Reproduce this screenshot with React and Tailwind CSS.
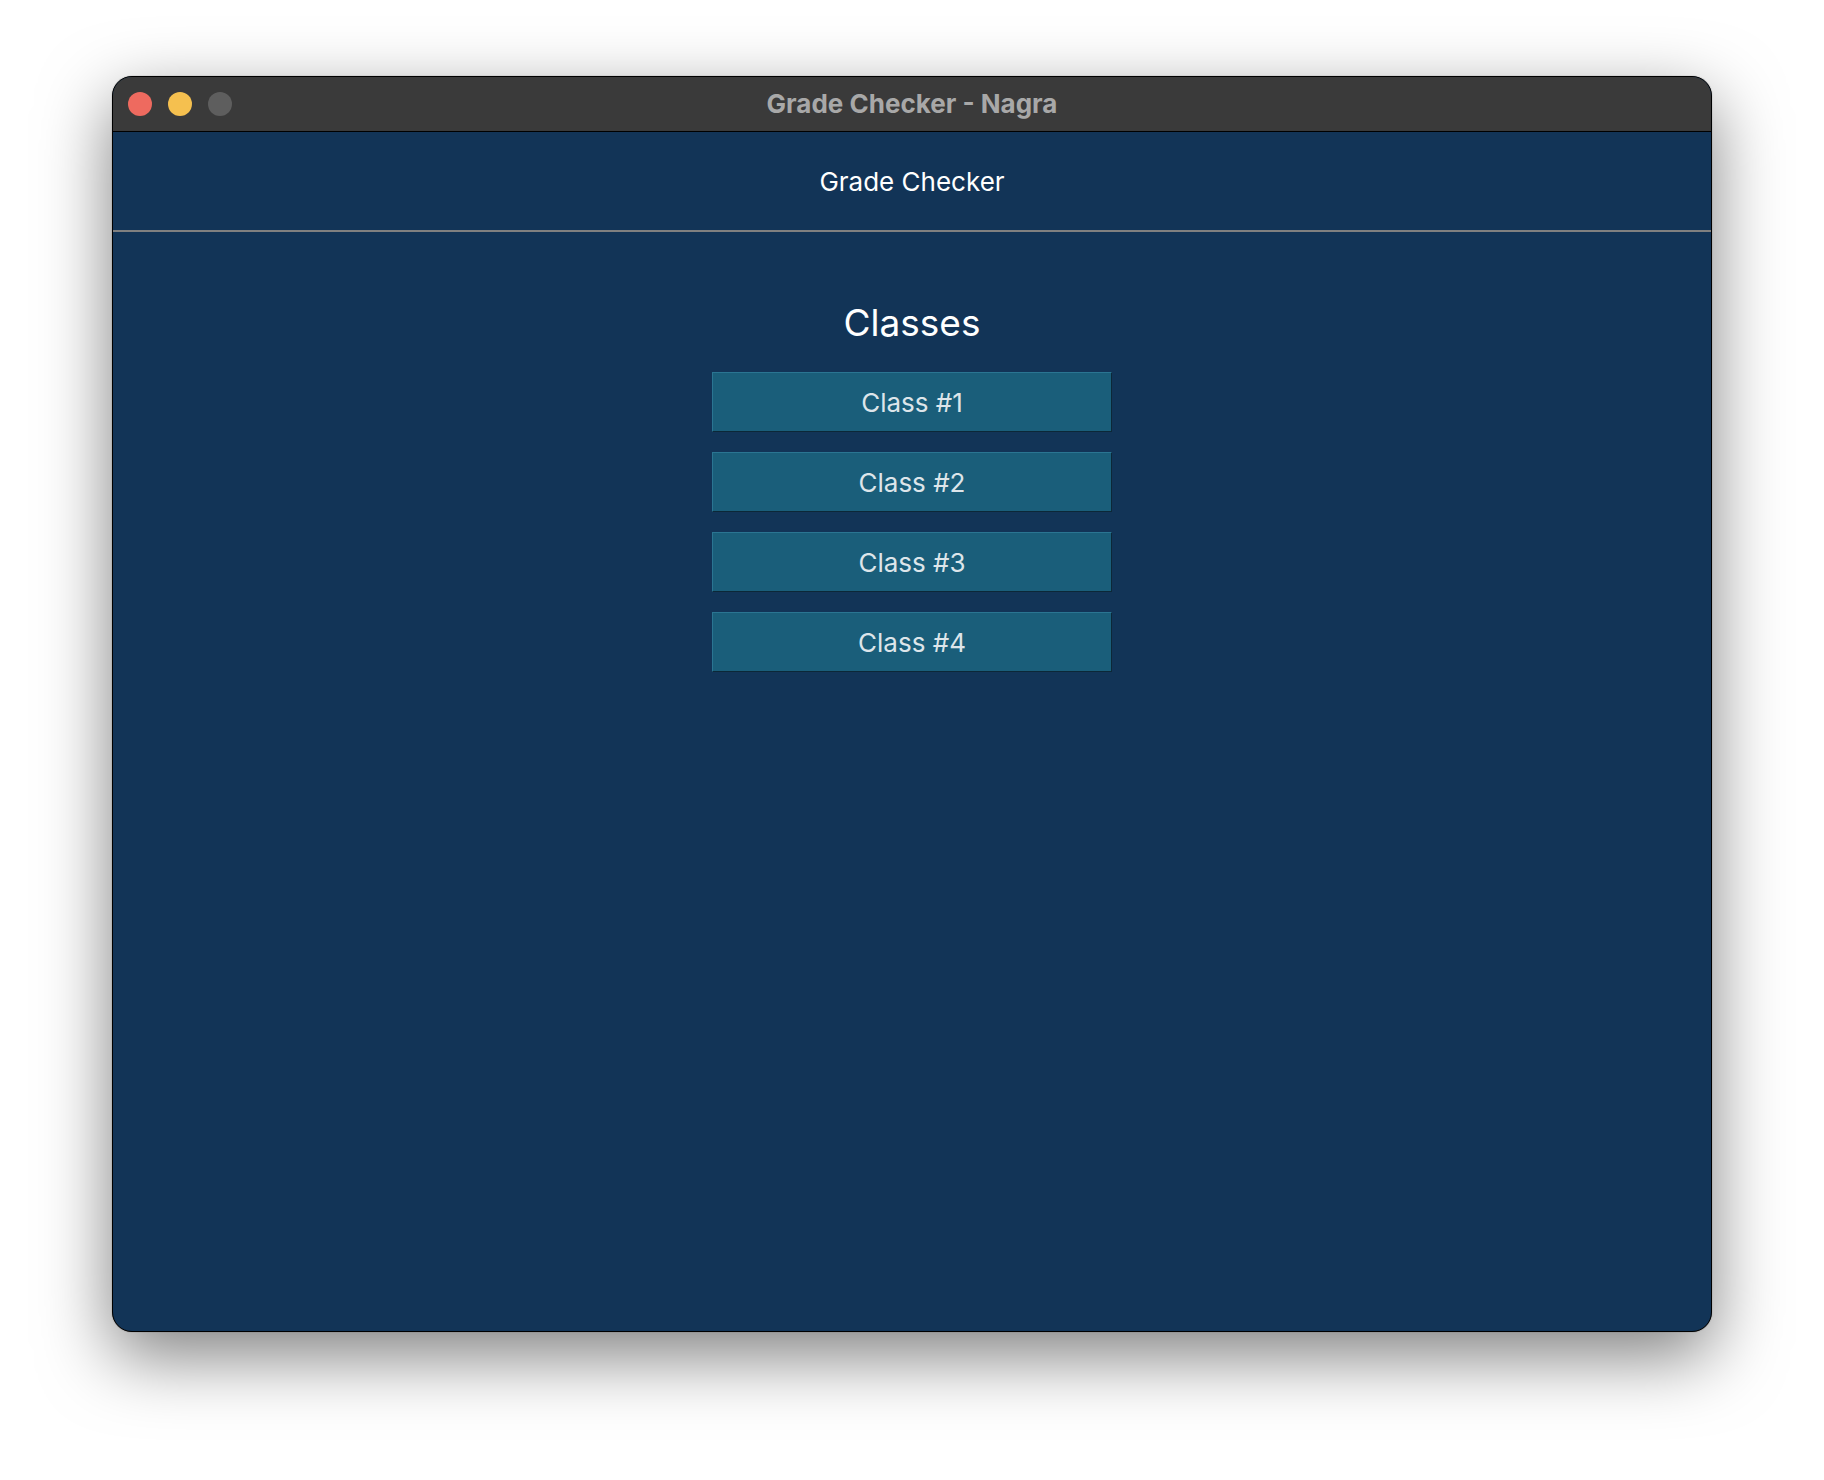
export default function App() {
  const classes = ["Class #1", "Class #2", "Class #3", "Class #4"];

  return (
    <div
      className="h-[1480px] w-[1824px] overflow-hidden bg-white pl-[112px] pt-[76px]"
      style={{ fontFamily: "Inter, 'Noto Sans', sans-serif" }}
    >
      <div className="flex h-[1256px] w-[1600px] flex-col overflow-hidden rounded-[20px] border border-black bg-[#123457] shadow-[0_24px_70px_rgba(0,0,0,0.5),0_0_1px_rgba(0,0,0,0.6)]">
        {/* title bar */}
        <div className="relative flex h-[55px] shrink-0 items-center border-b border-black bg-[#3a3a3a] px-[15px]">
          <div className="flex gap-4">
            <span className="h-6 w-6 rounded-full bg-[#ee6a5f]" />
            <span className="h-6 w-6 rounded-full bg-[#f5c04f]" />
            <span className="h-6 w-6 rounded-full bg-[#5e5e5e]" />
          </div>
          <div className="absolute inset-0 flex items-center justify-center pb-[2px] text-[26px] font-bold text-[#a8a8a8]">
            Grade Checker - Nagra
          </div>
        </div>

        {/* header */}
        <div className="flex h-[100px] shrink-0 items-center justify-center border-b-2 border-[#808080] text-[26px] text-white">
          Grade Checker
        </div>

        <div className="flex flex-col items-center pt-[67px]">
          <h1 className="text-[37px] leading-[48px] font-normal text-white">Classes</h1>
          <div className="mt-[25px] flex flex-col gap-5">
            {classes.map((name) => (
              <button
                key={name}
                className="flex h-[60px] w-[400px] items-center justify-center border border-t-[#2a7592] border-l-[#2a7592] border-r-[#0c2838] border-b-[#0c2838] bg-[#1a5e7a] text-[26px] text-[#dde5ea]"
              >
                {name}
              </button>
            ))}
          </div>
        </div>
      </div>
    </div>
  );
}
